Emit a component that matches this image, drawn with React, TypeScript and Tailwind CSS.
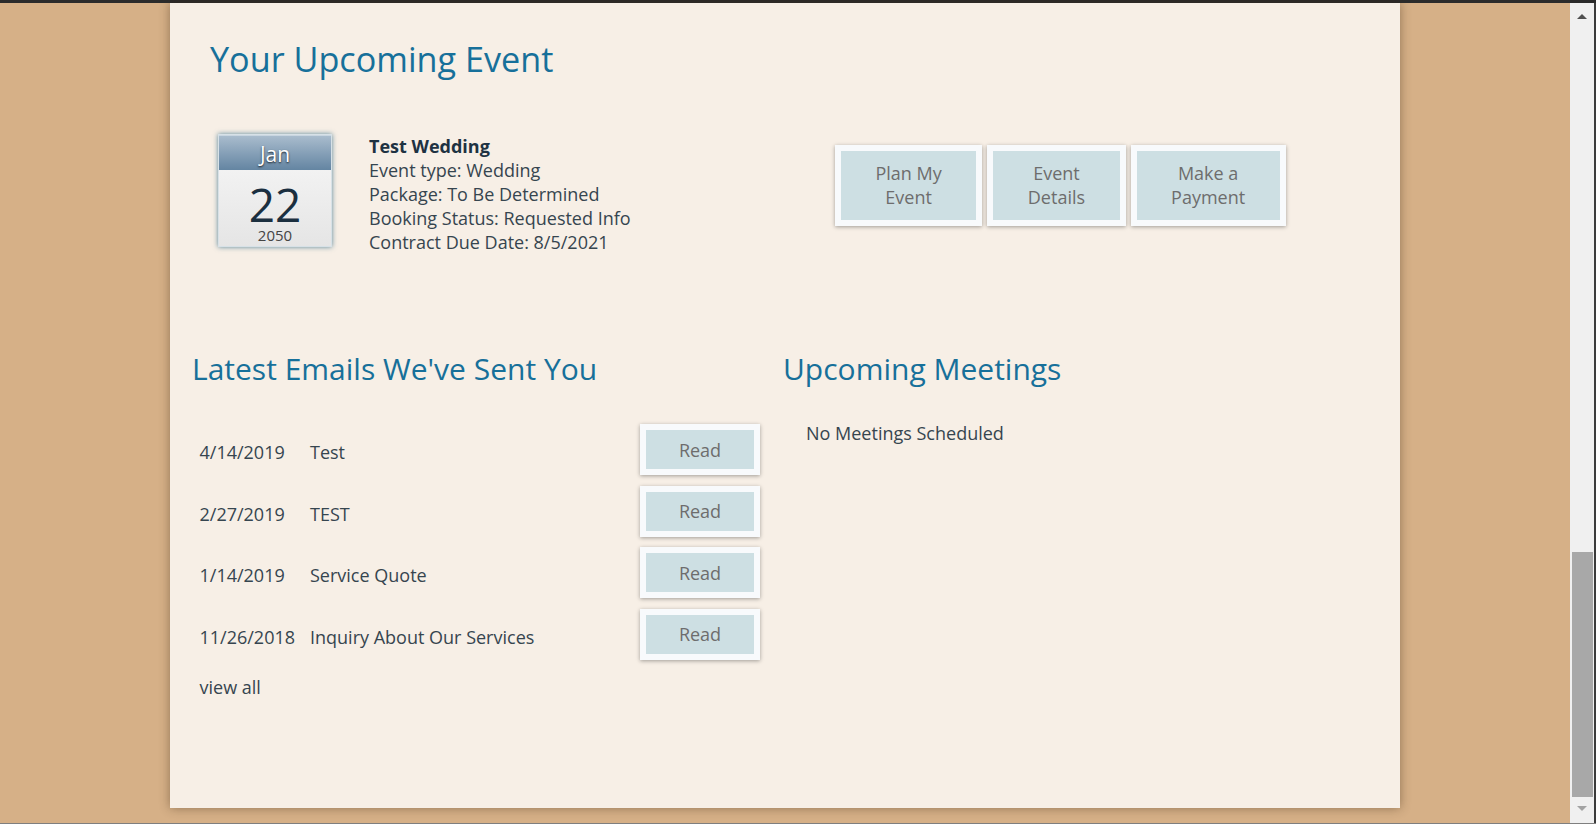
import React from "react";

const font = { fontFamily: '"Open Sans", "Noto Sans", sans-serif' };

function NavButton({ l1, l2 }: { l1: string; l2: string }) {
  return (
    <div className="border-[6px] border-[#f8fafc] shadow-[0_1px_4px_rgba(0,0,0,0.35)]">
      <div className="bg-[#cddfe3] px-[34.5px] pt-[10px] pb-[11px] text-center text-[18px] leading-[24px] text-[#6d6d6d]">
        {l1}
        <br />
        {l2}
      </div>
    </div>
  );
}

function ReadButton() {
  return (
    <div className="mt-[5px] w-[120px] h-[51px] border-[6px] border-[#f8fafc] shadow-[0_1px_4px_rgba(0,0,0,0.35)]">
      <div className="h-full w-full bg-[#cddfe3] flex items-center justify-center text-[18px] leading-[24px] text-[#6d6d6d]">
        Read
      </div>
    </div>
  );
}

const emails = [
  { d: "4/14/2019", s: "Test" },
  { d: "2/27/2019", s: "TEST" },
  { d: "1/14/2019", s: "Service Quote" },
  { d: "11/26/2018", s: "Inquiry About Our Services" },
];

export default function App() {
  return (
    <div className="w-[1596px] h-[824px] overflow-hidden flex flex-col bg-[#d6b087]" style={font}>
      <div className="h-[3px] bg-[#2b2b2b] shrink-0" />
      <div className="flex h-[820px] shrink-0">
        <div className="flex-1">
          <div className="ml-[170px] w-[1230px] h-[805px] bg-[#f7efe6] shadow-[0_0_10px_rgba(60,40,20,0.45)] flex flex-col text-[18px] leading-[24px] text-[#36454f]">
            <h1 className="mt-[36px] ml-[40px] text-[34.2px] leading-[40px] text-[#17709a] font-normal">
              Your Upcoming Event
            </h1>
            <div className="mt-[55px] h-[120px] flex items-start">
              <div className="ml-[48px] w-[114px] h-[113px] flex flex-col border border-[#d7e1e7] shadow-[0_0_5px_rgba(40,100,130,0.75)] bg-gradient-to-b from-[#f8f8f8] to-[#e5e5e5]">
                <div className="h-[35px] bg-gradient-to-b from-[#a9bccd] to-[#6485a2] border-t border-[#c9d6e0] text-center text-white text-[21px] leading-[34px] pt-[1px] [text-shadow:0_1px_2px_rgba(0,0,0,0.8)]">
                  Jan
                </div>
                <div className="mt-[17px] text-center text-[46px] leading-[34px] text-[#1b2f3f]">22</div>
                <div className="mt-[6px] text-center text-[15px] leading-[16px] text-[#444]">2050</div>
              </div>
              <div className="ml-[37px] w-[466px]">
                <div className="font-bold text-[#1e3242]">Test Wedding</div>
                <div>Event type: Wedding</div>
                <div>Package: To Be Determined</div>
                <div>Booking Status: Requested Info</div>
                <div>Contract Due Date: 8/5/2021</div>
              </div>
              <div className="mt-[11px] flex gap-[5px]">
                <NavButton l1="Plan My" l2="Event" />
                <NavButton l1="Event" l2="Details" />
                <NavButton l1="Make a" l2="Payment" />
              </div>
            </div>
            <div className="mt-[97px] flex">
              <div className="ml-[22px] w-[568px]">
                <h2 className="text-[30px] leading-[36px] text-[#17709a] font-normal">
                  Latest Emails We've Sent You
                </h2>
                <div className="mt-[32px]">
                  {emails.map((e) => (
                    <div key={e.d} className="h-[61.5px] flex items-start">
                      <div className="w-[118px] pl-[7.5px] pt-[21px]">{e.d}</div>
                      <div className="flex-1 pt-[21px]">{e.s}</div>
                      <ReadButton />
                    </div>
                  ))}
                </div>
                <div className="mt-[10px] pl-[7.5px]">view all</div>
              </div>
              <div className="ml-[23px]">
                <h2 className="text-[30px] leading-[36px] text-[#17709a] font-normal">Upcoming Meetings</h2>
                <div className="mt-[34px] pl-[23px]">No Meetings Scheduled</div>
              </div>
            </div>
          </div>
        </div>
        <div className="w-[26px] flex">
          <div className="w-[24px] bg-[#f0f0f0] flex flex-col items-center">
            <div className="mt-[11px] w-0 h-0 border-l-[5.5px] border-r-[5.5px] border-b-[5px] border-l-transparent border-r-transparent border-b-[#505050]" />
            <div className="mt-[533px] ml-[1px] w-[21px] h-[245px] bg-[#a8a8a8]" />
            <div className="mt-[9px] w-0 h-0 border-l-[5.5px] border-r-[5.5px] border-t-[5px] border-l-transparent border-r-transparent border-t-[#a3a3a3]" />
          </div>
          <div className="w-[2px] bg-[#3c3c3c]" />
        </div>
      </div>
      <div className="h-[1px] bg-[#7f7f7f] shrink-0" />
    </div>
  );
}
